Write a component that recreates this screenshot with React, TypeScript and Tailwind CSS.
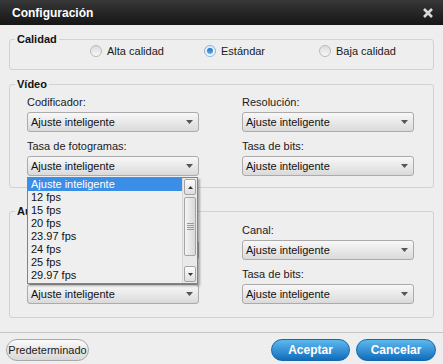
import React from 'react';

const fpsOptions = ['Ajuste inteligente', '12 fps', '15 fps', '20 fps', '23.97 fps', '24 fps', '25 fps', '29.97 fps'];

function Radio({ label, checked, width }: { label: string; checked?: boolean; width: string }) {
  return (
    <label className={`flex items-center gap-[5px] ${width}`}>
      {checked ? (
        <span className="flex h-3 w-3 items-center justify-center rounded-full border border-[#8fb4d8] bg-gradient-to-b from-[#dfeaf5] to-[#f7fbff]">
          <span className="h-[6px] w-[6px] rounded-full bg-gradient-to-b from-[#1c6fc4] to-[#5cb2ee]" />
        </span>
      ) : (
        <span className="h-3 w-3 rounded-full border border-[#b9b9b9] bg-gradient-to-b from-[#dcdcdc] to-[#f8f8f8]" />
      )}
      <span>{label}</span>
    </label>
  );
}

function Combo({ hidden, children }: { hidden?: boolean; children?: React.ReactNode }) {
  return (
    <div className="relative flex h-[20px] w-[172px] items-center rounded-[3px] border border-[#ababab] bg-gradient-to-b from-[#f8f8f8] to-[#dadada] pl-[3px] pr-[5px] text-[#111]">
      <span className={`flex-1 leading-none ${hidden ? 'invisible' : ''}`}>Ajuste inteligente</span>
      <svg width="7" height="4" viewBox="0 0 7 4">
        <path d="M0 0h7L3.5 4z" fill="#555" />
      </svg>
      {children}
    </div>
  );
}

// hidden = covered by the open list in the screenshot
function Field({
  label,
  hidden,
  hideCombo,
  children,
}: {
  label: string;
  hidden?: boolean;
  hideCombo?: boolean;
  children?: React.ReactNode;
}) {
  return (
    <div className="flex flex-col">
      <span className={`leading-[14px] text-[#1a1a1a] ${hidden ? 'invisible' : ''}`}>{label}</span>
      <div className="mt-[3px]">
        <Combo hidden={hideCombo}>{children}</Combo>
      </div>
    </div>
  );
}

function Group({ title, className, children }: { title: string; className?: string; children: React.ReactNode }) {
  return (
    <fieldset className={`rounded-[3px] border border-[#d2d2d2] p-0 ${className ?? ''}`}>
      <legend className="ml-[5px] px-[2px] text-[11px] font-bold leading-[14px] text-[#111]">{title}</legend>
      {children}
    </fieldset>
  );
}

function FpsList() {
  return (
    <div className="absolute -left-[1px] top-[20px] z-10 flex h-[107px] w-[171px] border border-[#838383] bg-[#efefef] shadow-[2px_2px_2px_rgba(0,0,0,0.3)]">
      <div className="flex-1">
        {fpsOptions.map((o, i) => (
          <div
            key={o}
            className={`h-[13px] pl-[3px] leading-[13px] ${i === 0 ? 'bg-[#3a8ee6] text-white' : 'text-[#111]'}`}
          >
            {o}
          </div>
        ))}
      </div>
      {/* scrollbar */}
      <div className="flex w-[15px] flex-col border-l border-[#d8d8d8] bg-[#e9e9e9] p-[1px]">
        <div className="flex h-[16px] items-center justify-center rounded-[2px] border border-[#a4a4a4] bg-gradient-to-b from-[#fbfbfb] to-[#dedede]">
          <svg width="5" height="3" viewBox="0 0 5 3">
            <path d="M0 3h5L2.5 0z" fill="#333" />
          </svg>
        </div>
        <div className="mt-[2px] flex h-[59px] flex-col items-center justify-center gap-[1px] rounded-[2px] border border-[#a4a4a4] bg-gradient-to-r from-[#f4f4f4] to-[#d9d9d9]">
          <span className="h-px w-[7px] bg-[#9a9a9a]" />
          <span className="h-px w-[7px] bg-[#9a9a9a]" />
          <span className="h-px w-[7px] bg-[#9a9a9a]" />
          <span className="h-px w-[7px] bg-[#9a9a9a]" />
        </div>
        <div className="flex-1" />
        <div className="flex h-[16px] items-center justify-center rounded-[2px] border border-[#a4a4a4] bg-gradient-to-b from-[#fbfbfb] to-[#dedede]">
          <svg width="5" height="3" viewBox="0 0 5 3">
            <path d="M0 0h5L2.5 3z" fill="#333" />
          </svg>
        </div>
      </div>
    </div>
  );
}

export default function App() {
  return (
    <div className="flex h-[364px] w-[443px] flex-col overflow-hidden bg-[#eeeeee] font-['Liberation_Sans',Arial,sans-serif] text-[11px]">
      {/* Title bar */}
      <div className="flex h-[25px] items-center justify-between bg-gradient-to-b from-[#383838] to-[#161616] pl-[12px] pr-[10px]">
        <span className="text-[12px] font-bold text-white">Configuración</span>
        <svg width="10" height="10" viewBox="0 0 10 10">
          <path d="M1 1L9 9M9 1L1 9" stroke="#d9d9d9" strokeWidth="2.6" />
        </svg>
      </div>

      <div className="px-[9px]">
        {/* Calidad */}
        <Group title="Calidad" className="mt-[7px]">
          <div className="-mt-[1px] flex h-[12px] items-center pl-[80px] text-[#1a1a1a]">
            <Radio label="Alta calidad" width="w-[114px]" />
            <Radio label="Estándar" checked width="w-[115px]" />
            <Radio label="Baja calidad" width="w-[100px]" />
          </div>
          <div className="h-[12px]" />
        </Group>

        {/* Vídeo */}
        <Group title="Vídeo" className="mt-[7px]">
          <div className="grid grid-cols-[172px_172px] gap-x-[43px] gap-y-[7px] pb-[11px] pl-[17px] pt-[4px]">
            <Field label="Codificador:" />
            <Field label="Resolución:" />
            <Field label="Tasa de fotogramas:">
              <FpsList />
            </Field>
            <Field label="Tasa de bits:" />
          </div>
        </Group>

        {/* Audio */}
        <Group title="Audio" className="mt-[16px]">
          <div className="grid grid-cols-[172px_172px] gap-x-[43px] gap-y-[7px] pb-[13px] pl-[17px] pt-[5px]">
            <Field label="Codificador:" hidden hideCombo />
            <Field label="Canal:" />
            <Field label="Tasa de muestreo:" hidden />
            <Field label="Tasa de bits:" />
          </div>
        </Group>
      </div>

      {/* Footer */}
      <div className="mt-[14px] flex items-center justify-between border-t border-[#c6c6c6] pb-[3px] pl-[6px] pr-[7px] pt-[6px]">
        <button className="h-[22px] w-[83px] rounded-full border border-[#a9a9a9] bg-gradient-to-b from-[#fafafa] to-[#d8d8d8] text-[11px] text-[#1a1a1a]">
          Predeterminado
        </button>
        <div className="flex gap-[6px]">
          <button className="h-[22px] w-[79px] rounded-full border border-[#1667ab] bg-gradient-to-b from-[#5cb9ee] to-[#0d6dbd] text-[12px] font-bold text-white">
            Aceptar
          </button>
          <button className="h-[22px] w-[80px] rounded-full border border-[#1667ab] bg-gradient-to-b from-[#5cb9ee] to-[#0d6dbd] text-[12px] font-bold text-white">
            Cancelar
          </button>
        </div>
      </div>
    </div>
  );
}
